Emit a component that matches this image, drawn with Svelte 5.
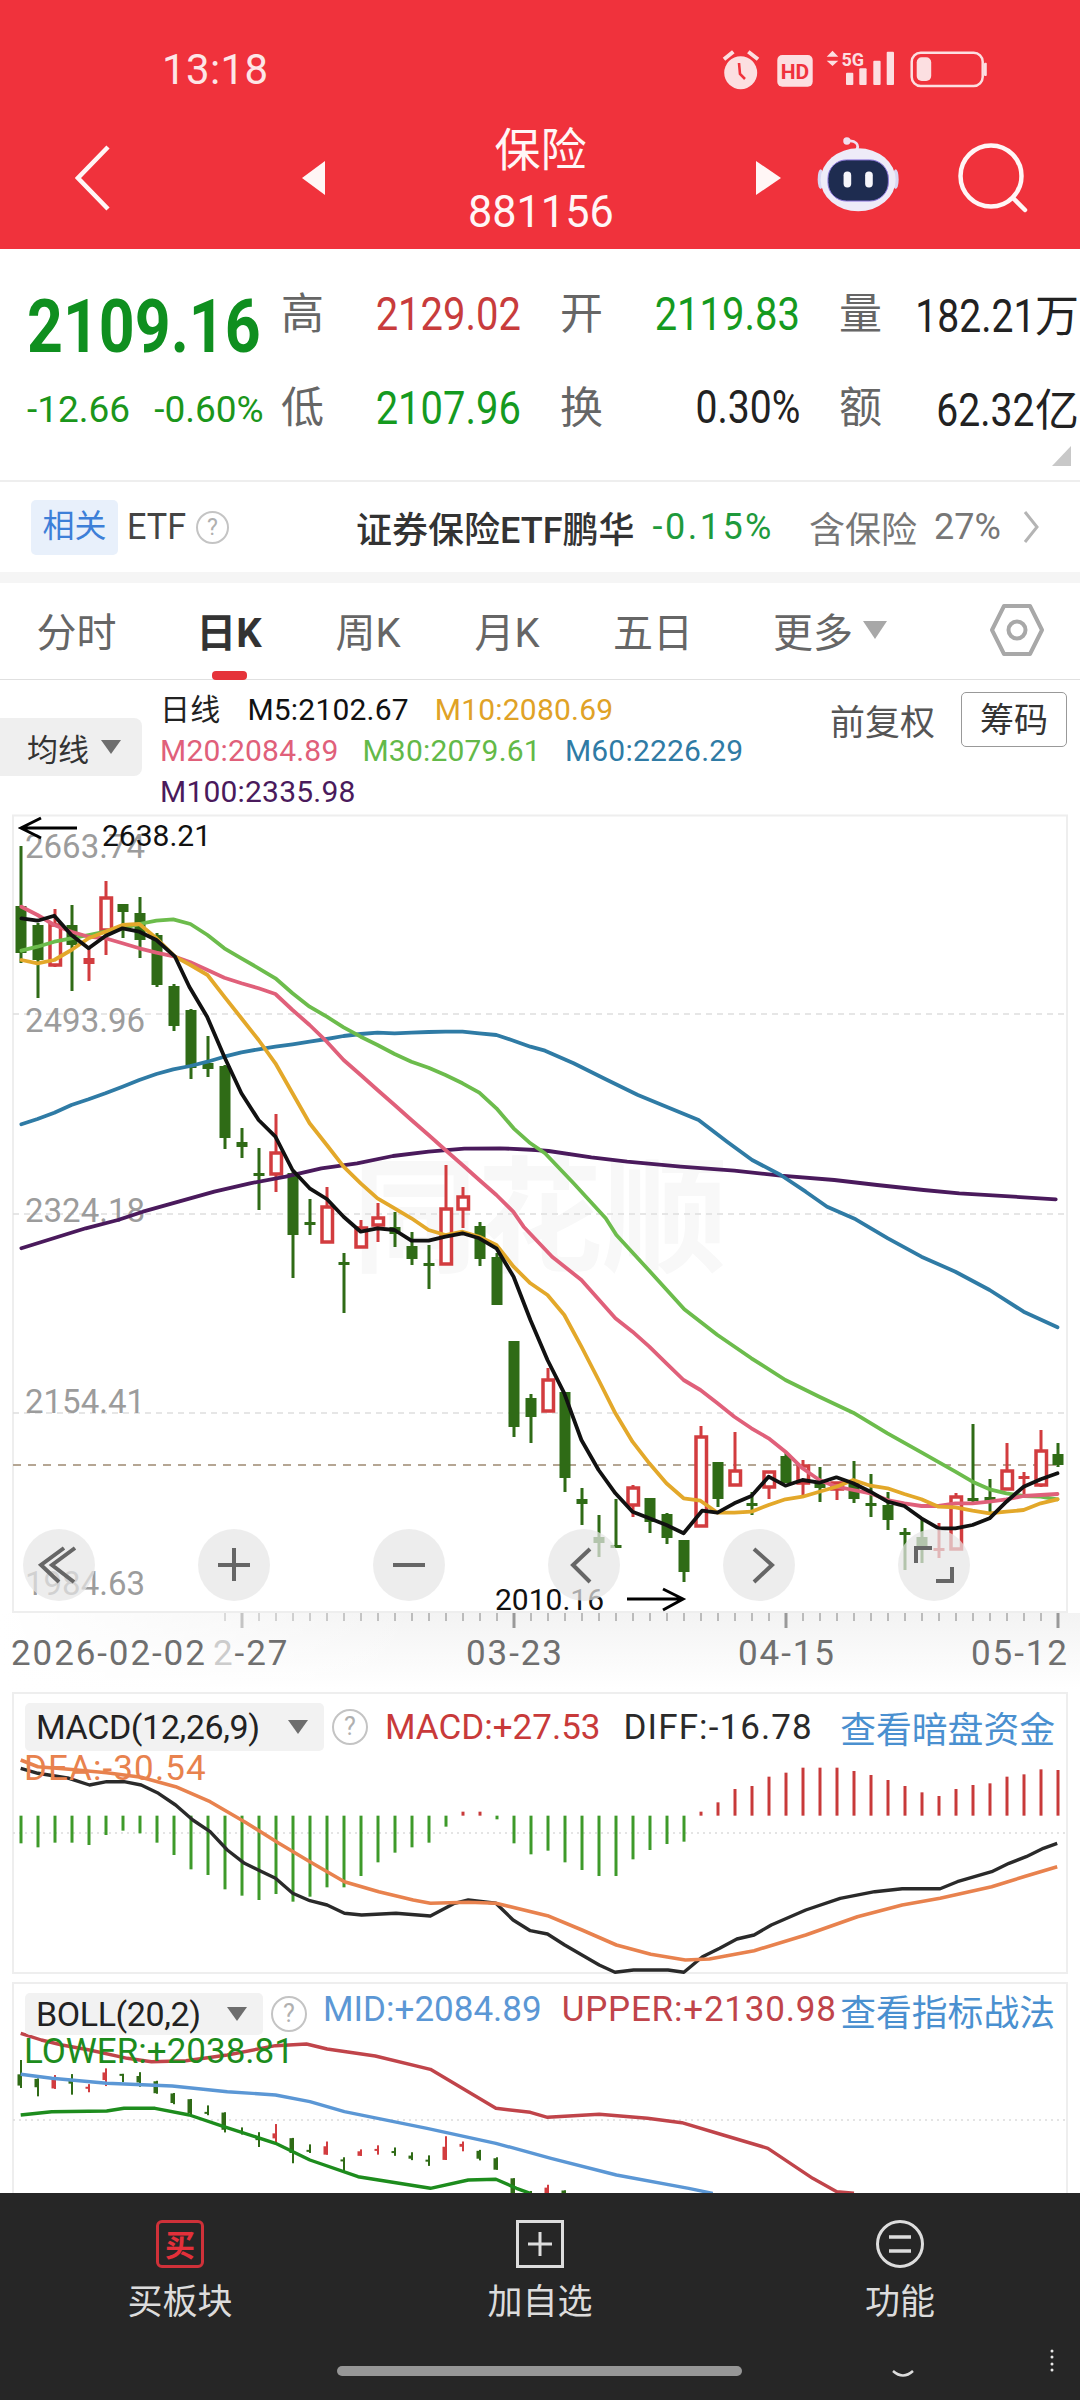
<script lang="ts">
    // crop helpers: series below were read off the reference in crop coordinates
    const mapPts = (sx: number, ox: number, oy: number) => (pts: number[][]) =>
        pts.map(([x, y]) => [ox + x / sx, oy + y / 3]);
    const topL = mapPts(2.8, 0, 800);
    const topR = mapPts(2.8, 520, 800);
    const botL = mapPts(2.8, 0, 1220);
    const botR = mapPts(2.8, 520, 1220);
    const macdP = mapPts(1.452, 0, 1640);
    const bollP = mapPts(1.452, 0, 1980);
    const line = (pts: number[][]) =>
        pts.map(([x, y]) => `${x.toFixed(1)},${y.toFixed(1)}`).join(" ");

    const stepX = (i: number) => 21 + 17 * i;

    // wickTop, wickBottom, bodyTop, bodyBottom, kind
    const candles: [number, number, number, number, string][] = [
        [846, 963, 906, 953, "g"], [923, 998, 925, 960, "g"], [909, 967, 925, 965, "h"],
        [905, 991, 925, 945, "g"], [947, 981, 958, 964, "r"], [881, 955, 898, 930, "h"],
        [904, 938, 904, 912, "g"], [897, 958, 913, 940, "g"], [933, 987, 935, 985, "g"],
        [984, 1031, 986, 1026, "g"], [1009, 1079, 1010, 1068, "g"], [1036, 1077, 1063, 1069, "g"],
        [1065, 1149, 1066, 1138, "g"], [1128, 1158, 1142, 1147, "g"], [1148, 1210, 1173, 1175, "g"],
        [1114, 1192, 1153, 1174, "h"], [1172, 1278, 1173, 1235, "g"], [1199, 1235, 1222, 1225, "g"],
        [1187, 1242, 1207, 1242, "h"], [1253, 1313, 1262, 1264, "g"], [1220, 1247, 1228, 1247, "h"],
        [1203, 1242, 1218, 1225, "h"], [1212, 1247, 1227, 1234, "g"], [1232, 1265, 1246, 1259, "g"],
        [1245, 1289, 1263, 1265, "g"], [1165, 1264, 1209, 1264, "h"], [1187, 1228, 1197, 1209, "h"],
        [1222, 1266, 1226, 1259, "g"], [1253, 1305, 1257, 1305, "g"], [1341, 1437, 1341, 1427, "g"],
        [1394, 1443, 1398, 1417, "g"], [1368, 1411, 1380, 1411, "h"], [1392, 1492, 1392, 1478, "g"],
        [1488, 1525, 1499, 1504, "g"], [1515, 1557, 1537, 1543, "g"], [1499, 1547, 1545, 1547, "g"],
        [1485, 1517, 1488, 1505, "h"], [1498, 1533, 1498, 1522, "g"], [1513, 1544, 1514, 1538, "g"],
        [1540, 1582, 1540, 1572, "g"], [1426, 1526, 1437, 1526, "h"], [1462, 1507, 1462, 1499, "g"],
        [1432, 1485, 1471, 1485, "h"], [1492, 1515, 1503, 1506, "g"], [1472, 1499, 1472, 1487, "h"],
        [1453, 1483, 1456, 1483, "g"], [1460, 1495, 1466, 1483, "h"], [1467, 1502, 1482, 1488, "g"],
        [1482, 1500, 1483, 1489, "h"], [1461, 1503, 1483, 1499, "g"], [1474, 1517, 1503, 1505, "g"],
        [1492, 1530, 1505, 1520, "g"], [1528, 1570, 1532, 1534, "g"], [1518, 1563, 1537, 1547, "g"],
        [1523, 1558, 1548, 1550, "r"], [1493, 1549, 1497, 1549, "h"], [1424, 1502, 1498, 1500, "g"],
        [1479, 1515, 1497, 1501, "g"], [1443, 1489, 1471, 1489, "h"], [1472, 1495, 1476, 1478, "r"],
        [1430, 1487, 1451, 1485, "h"], [1443, 1467, 1454, 1465, "g"],
    ];

    const m5 = [
        ...topL([[60,355],[105,362],[152,347],[200,405],[248,445],[295,408],[343,385],[390,395],[438,420],[490,470],[530,560],[580,650],[628,770],[676,880],[724,960],[771,1010],[819,1110],[867,1165],[915,1197],[962,1250]]),
        ...botL([[1010,35],[1057,25],[1105,30],[1152,62],[1200,62],[1247,50],[1295,40],[1342,55],[1390,85],[1438,170],[1485,300],[1533,420]]),
        ...botR([[124,520],[172,660],[220,750],[267,820],[315,875],[362,895],[410,915],[458,940],[510,872],[553,878],[600,850],[648,828],[696,770],[743,797],[791,780],[838,788],[886,772],[933,790],[981,815],[1029,845],[1076,858],[1124,895],[1172,925],[1219,925],[1267,915],[1315,895],[1362,845],[1410,800],[1458,778],[1505,760]]),
    ];
    const m10 = [
        ...topL([[60,480],[105,490],[152,480],[200,450],[248,415],[295,395],[343,375],[390,372],[438,415],[490,470],[533,495],[581,525],[628,590],[676,655],[724,720],[771,790],[819,880],[867,970],[915,1035],[962,1100],[1010,1150],[1057,1195],[1105,1225],[1152,1255]]),
        ...botL([[1200,30],[1247,45],[1295,35],[1342,50],[1390,75],[1438,140],[1485,190],[1533,225]]),
        ...botR([[124,285],[172,380],[220,480],[267,580],[315,665],[362,730],[410,790],[458,835],[505,842],[553,878],[600,878],[648,875],[696,855],[743,838],[791,830],[838,815],[886,800],[933,780],[981,797],[1029,805],[1076,822],[1124,838],[1172,860],[1219,862],[1267,872],[1315,880],[1362,875],[1410,870],[1458,850],[1505,838]]),
    ];
    const m20 = [
        ...topL([[60,320],[105,345],[152,375],[200,395],[248,410],[295,415],[343,430],[390,445],[438,458],[490,470],[533,487],[581,510],[628,533],[676,550],[724,565],[771,582],[819,630],[867,675],[915,725],[962,780],[1010,825],[1057,870],[1105,915],[1152,960],[1200,1005],[1247,1050],[1295,1095],[1342,1140],[1390,1185],[1437,1235]]),
        ...botR([[10,20],[90,110],[172,180],[267,295],[315,335],[362,380],[410,430],[458,480],[505,510],[553,550],[600,590],[648,625],[696,655],[743,695],[791,745],[838,780],[886,800],[933,810],[981,820],[1029,840],[1076,850],[1124,858],[1172,858],[1219,850],[1267,850],[1315,845],[1362,838],[1410,828],[1458,825],[1505,822]]),
    ];
    const m30 = [
        ...topL([[60,452],[105,440],[152,425],[200,415],[248,405],[295,395],[343,385],[390,372],[438,362],[485,358],[533,372],[581,405],[628,445],[676,475],[724,505],[771,535],[819,580],[867,620],[915,650],[962,682],[1010,710],[1057,735],[1105,762],[1152,785],[1200,803],[1247,825],[1295,850],[1342,878],[1390,925],[1438,985],[1485,1030]]),
        ...topR([[70,1060],[150,1150],[240,1255]]),
        ...botR([[270,45],[360,150],[460,268],[553,345],[648,415],[743,480],[838,530],[933,578],[1029,640],[1124,697],[1219,755],[1267,785],[1315,808],[1362,820],[1410,828],[1458,830],[1505,838]]),
    ];
    const m60 = [
        ...topL([[60,973],[105,957],[152,938],[200,915],[248,898],[295,880],[343,860],[390,840],[438,822],[485,808],[533,798],[581,785],[628,770],[676,757],[724,748],[771,740],[819,733],[867,725],[915,717],[962,708],[1010,702],[1057,698],[1105,700],[1152,698],[1200,696],[1247,695],[1295,695],[1342,700],[1390,705],[1438,722],[1485,740]]),
        ...topR([[70,752],[150,790],[240,838],[330,885],[420,925],[500,960],[580,1025],[650,1080],[730,1125],[800,1175],[860,1220],[940,1258]]),
        ...botR([[1030,55],[1124,110],[1219,155],[1315,210],[1410,275],[1505,322]]),
    ];
    const m100 = [
        ...botL([[60,85],[240,25]]),
        ...topL([[330,1260],[400,1235],[500,1205],[600,1175],[700,1150],[800,1130],[900,1105],[1000,1090],[1100,1068],[1200,1055],[1300,1046],[1400,1045],[1500,1050]]),
        ...topR([[80,1053],[200,1072],[300,1085],[450,1100],[600,1112],[730,1127],[880,1140],[1000,1155],[1130,1170],[1230,1180],[1500,1198]]),
    ];
    const maLines = [
        { pts: m100, color: "#4a1a5c" },
        { pts: m60, color: "#2f7ba5" },
        { pts: m30, color: "#6cbc4c" },
        { pts: m20, color: "#e0607a" },
        { pts: m10, color: "#e3a82a" },
        { pts: m5, color: "#111" },
    ];

    const yLabels = [
        { text: "2663.74", y: 858 },
        { text: "2493.96", y: 1032 },
        { text: "2324.18", y: 1222 },
        { text: "2154.41", y: 1413 },
        { text: "1984.63", y: 1595 },
    ];
    const gridYs = [1014, 1214, 1413];
    const ticks = Array.from({ length: 50 }, (_, k) => k + 12);

    const floatBtns = [59, 234, 409, 584, 759, 934];

    // crop-y of each MACD bar's free end, baseline is 527
    const macdEnds = [
        610,622,608,608,615,585,572,580,608,645,688,705,748,767,780,762,785,770,742,742,708,667,638,622,608,560,
        515,515,538,610,643,632,667,690,708,708,658,630,612,605,
        515,487,447,438,410,398,383,383,383,393,405,420,438,457,468,447,435,430,410,403,388,390,
    ];
    const macdZero = 1640 + 527 / 3;
    const macdBars = macdEnds.map((end, i) => ({
        x: stepX(i),
        y2: 1640 + end / 3,
        up: end < 527,
    }));
    const diff = macdP([[30,385],[55,400],[100,415],[130,435],[155,425],[180,425],[205,435],[230,460],[255,495],[280,540],[305,575],[330,630],[355,670],[375,690],[400,715],[425,760],[450,782],[475,795],[500,820],[525,825],[575,820],[625,828],[660,790],[680,780],[720,790],[745,840],[770,872],[795,882],[820,915],[870,975],[893,997],[920,990],[970,990],[993,997],[1020,950],[1045,925],[1070,897],[1095,885],[1120,855],[1170,810],[1220,775],[1270,755],[1310,746],[1365,746],[1390,725],[1440,695],[1465,670],[1490,650],[1515,625],[1535,610]]);
    const dea = macdP([[30,360],[55,380],[100,388],[155,398],[205,412],[255,440],[305,485],[355,545],[405,610],[450,665],[500,725],[550,755],[600,780],[625,790],[680,787],[720,790],[795,827],[845,870],[895,915],[945,943],[995,960],[1030,957],[1095,932],[1170,885],[1245,830],[1310,795],[1365,775],[1440,740],[1490,708],[1535,680]]);

    const upper = bollP([[30,160],[60,180],[90,195],[130,210],[185,235],[220,245],[270,242],[330,225],[400,197],[445,192],[475,207],[545,228],[625,268],[720,385],[770,397],[795,412],[870,403],[940,415],[990,428],[1050,465],[1115,505],[1180,595],[1215,635],[1240,640]]);
    const mid = bollP([[30,283],[75,295],[155,310],[250,318],[330,335],[400,345],[450,365],[500,395],[620,445],[720,490],[800,535],[895,585],[1000,625],[1035,640]]);
    const lower = bollP([[30,405],[75,395],[155,393],[180,385],[225,385],[275,405],[325,440],[400,490],[450,540],[520,590],[625,625],[680,600],[720,598],[750,625],[770,640]]);
    const miniY = (y: number) => 2060 + (y - 846) * 0.239;

    const tabs = [
        { label: "分时", w: 153 },
        { label: "日K", w: 152, active: true },
        { label: "周K", w: 126 },
        { label: "月K", w: 152 },
        { label: "五日", w: 140 },
    ];
</script>

<div class="page">
    <header class="top">
        <div class="status">
            <span class="time">13:18</span>
            <svg class="status-icons" width="270" height="46" viewBox="0 0 270 46">
                <circle cx="20.7" cy="26.7" r="16.5" fill="#fcdfe1" />
                <path d="M19 17 L20 28 L25 33" fill="none" stroke="#f0323c" stroke-width="2.6" />
                <path d="M4 13.3 L13.3 5.7 M28.3 5.7 L38 13.3" stroke="#fcdfe1" stroke-width="4" />
                <rect x="57.3" y="9" width="35.4" height="31.7" rx="5" fill="#fcdfe1" />
                <text x="75" y="32.5" class="hd">HD</text>
                <path d="M112.5 4.7 L106.7 10.7 H118.3 Z M106.7 14.7 H118.3 L112.5 20 Z" fill="#fcdfe1" />
                <text x="121.5" y="19.5" class="five-g">5G</text>
                <rect x="126" y="26.7" width="7.3" height="12.3" rx="1" fill="#fcdfe1" />
                <rect x="139.3" y="22.3" width="7.3" height="16.7" rx="1" fill="#fcdfe1" />
                <rect x="153.3" y="14.7" width="7.3" height="24.3" rx="1" fill="#fcdfe1" />
                <rect x="166.7" y="5.7" width="7.3" height="33.3" rx="1" fill="#fcdfe1" />
                <rect x="191.7" y="6.7" width="71" height="33.3" rx="9" fill="none" stroke="#fcdfe1" stroke-width="2.5" />
                <rect x="196.7" y="11.3" width="14.5" height="23.7" rx="5" fill="#fcdfe1" />
                <rect x="264" y="16.7" width="2.8" height="13.3" rx="1" fill="#fcdfe1" />
            </svg>
        </div>
        <div class="nav">
            <svg class="back" width="36" height="66" viewBox="0 0 36 66">
                <path d="M33 2 L3 33 L33 64" fill="none" stroke="#fff6f6" stroke-width="4.5" />
            </svg>
            <svg class="tri-left" width="23" height="34" viewBox="0 0 23 34"><path d="M23 0 V34 L0 17 Z" fill="#fff6f6" /></svg>
            <div class="title">
                <span class="name">保险</span>
                <span class="code">881156</span>
            </div>
            <svg class="tri-right" width="25" height="34" viewBox="0 0 25 34"><path d="M0 0 V34 L25 17 Z" fill="#fff6f6" /></svg>
            <svg class="robot" width="83" height="78" viewBox="355 315 250 235">
                <path d="M472 362 C486 345 470 328 445 334" fill="none" stroke="#f1dfef" stroke-width="8" />
                <circle cx="445" cy="333" r="11" fill="#f1dfef" />
                <ellipse cx="366" cy="448" rx="9" ry="30" fill="#d8d6f2" />
                <ellipse cx="592" cy="448" rx="9" ry="30" fill="#d8d6f2" />
                <ellipse cx="479" cy="450" rx="113" ry="95" fill="#eeebf8" />
                <rect x="388" y="390" width="182" height="124" rx="56" fill="#1e2c50" stroke="#8d78dd" stroke-width="3" />
                <rect x="435" y="425" width="23" height="48" rx="11" fill="#f6f6fb" />
                <rect x="500" y="425" width="23" height="48" rx="11" fill="#f6f6fb" />
            </svg>
            <svg class="search" width="70" height="70" viewBox="0 0 70 70">
                <circle cx="33" cy="33" r="30.5" fill="none" stroke="#fff6f6" stroke-width="4.5" />
                <path d="M55 55 L67 67" stroke="#fff6f6" stroke-width="4.5" stroke-linecap="round" />
            </svg>
        </div>
    </header>

    <section class="quote">
        <div class="cell-left">
            <div class="price">2109.16</div>
        </div>
        <div class="cell"><span class="label">高</span><span class="val red">2129.02</span></div>
        <div class="cell"><span class="label">开</span><span class="val green">2119.83</span></div>
        <div class="cell"><span class="label">量</span><span class="unit-val"><span class="val dark">182.21</span>万</span></div>
        <div class="cell-left change">
            <span>-12.66</span>
            <span>-0.60%</span>
        </div>
        <div class="cell"><span class="label">低</span><span class="val green">2107.96</span></div>
        <div class="cell"><span class="label">换</span><span class="val dark">0.30%</span></div>
        <div class="cell"><span class="label">额</span><span class="unit-val"><span class="val dark">62.32</span>亿</span></div>
        <span class="corner"></span>
    </section>

    <section class="etf">
        <span class="badge">相关</span>
        <span class="etf-tag">ETF</span>
        <span class="help etf-help">?</span>
        <span class="etf-name">证券保险ETF鹏华</span>
        <span class="etf-chg">-0.15%</span>
        <span class="etf-hold">含保险</span>
        <span class="etf-pct">27%</span>
        <svg class="etf-arrow" width="16" height="32" viewBox="0 0 16 32">
            <path d="M2 1 L14 16 L2 31" fill="none" stroke="#b4b4b4" stroke-width="3" />
        </svg>
    </section>
    <div class="band"></div>

    <nav class="tabs">
        {#each tabs as t}
            <span class="tab" class:active={t.active} style="width:{t.w}px">{t.label}</span>
        {/each}
        <span class="tab more">更多<i class="caret"></i></span>
        <svg class="gear" width="54" height="54" viewBox="0 0 54 54">
            <path d="M14 3 H40 L52 27 L40 51 H14 L2 27 Z" fill="none" stroke="#a8a8a8" stroke-width="4" stroke-linejoin="round" />
            <circle cx="27" cy="27" r="8.5" fill="none" stroke="#a8a8a8" stroke-width="4" />
        </svg>
    </nav>

    <div class="legend-row">
        <div class="ma-btn">均线<i class="caret small"></i></div>
        <div class="legend">
            <span class="cn">日线</span>
            <span style="color:#111">M5:2102.67</span>
            <span class="m10" style="color:#e0a226">M10:2080.69</span>
            <span style="color:#e0607a">M20:2084.89</span>
            <span style="color:#63b948">M30:2079.61</span>
            <span style="color:#2f7ba5">M60:2226.29</span>
            <span style="color:#4a1a5c">M100:2335.98</span>
        </div>
        <div class="legend-right">
            <span class="adjust">前复权</span>
            <span class="chip">筹码</span>
        </div>
    </div>

    <svg class="chart main" width="1080" height="878" viewBox="0 814 1080 878">
        <defs>
            <linearGradient id="bandFade" x1="0" y1="0" x2="0" y2="1">
                <stop offset="0" stop-color="#f3f3f3" />
                <stop offset="1" stop-color="#fff" />
            </linearGradient>
            <linearGradient id="leftFade" x1="0" y1="0" x2="1" y2="0">
                <stop offset="0" stop-color="#fff" />
                <stop offset="1" stop-color="#fff" stop-opacity="0" />
            </linearGradient>
        </defs>

        <text x="540" y="1262" class="watermark">同花顺</text>

        <rect x="13" y="815.5" width="1054" height="796.5" fill="none" stroke="#eeeeee" stroke-width="2" />
        {#each gridYs as y}
            <line x1="13" x2="1067" y1={y} y2={y} stroke="#dedede" stroke-width="1.5" stroke-dasharray="6 5" />
        {/each}
        <line x1="13" x2="1060" y1="1465" y2="1465" stroke="#b5a694" stroke-width="2" stroke-dasharray="8 7" />

        {#each yLabels as l}
            <text x="25" y={l.y} class="y-label">{l.text}</text>
        {/each}

        {#each candles as [wt, wb, bt, bb, kind], i}
            {@const color = kind === "g" ? "#2f6b16" : "#d23c3f"}
            <rect x={stepX(i) - 1.5} y={wt} width="3" height={wb - wt} fill={color} />
            {#if kind === "h"}
                <rect x={stepX(i) - 5} y={bt} width="10.5" height={bb - bt} fill="#fff" stroke={color} stroke-width="3.5" />
            {:else}
                <rect x={stepX(i) - 5.5} y={bt} width="11" height={Math.max(bb - bt, 3)} fill={color} />
            {/if}
        {/each}

        {#each maLines as m}
            <polyline points={line(m.pts)} fill="none" stroke={m.color} stroke-width="3.8" stroke-linejoin="round" stroke-linecap="round" />
        {/each}

        <text x="102" y="846" class="mark">2638.21</text>
        <path d="M77 828 H21 M41 818 L21 828 L41 838" fill="none" stroke="#000" stroke-width="3" />
        <text x="495" y="1610" class="mark">2010.16</text>
        <path d="M627 1599 H683 M663 1589 L683 1599 L663 1610" fill="none" stroke="#000" stroke-width="3" />

        {#each floatBtns as cx}
            <circle {cx} cy="1565" r="36" fill="#e6e6e6" fill-opacity="0.72" />
        {/each}
        <g fill="none" stroke="#666" stroke-width="4">
            <path d="M64 1548 L41 1565 L59 1582 M75 1548 L52 1565 L74 1582" />
            <path d="M218 1565 H250 M234 1548 V1581" />
            <path d="M393 1565 H425" />
            <path d="M590 1549 L573 1565 L590 1582" />
            <path d="M754 1549 L772 1565 L754 1582" />
            <path d="M916 1563 V1548 H932 M936 1581 H952 V1567" />
        </g>

        <rect x="0" y="1613" width="1080" height="76" fill="url(#bandFade)" />
        {#each ticks as i}
            {@const major = (i - 13) % 16 === 0}
            <rect x={stepX(i) - (major ? 1.5 : 1)} y="1613" width={major ? 3 : 2} height={major ? 15 : 8} fill={major ? "#999" : "#bbb"} />
        {/each}
        <rect x="0" y="1613" width="420" height="76" fill="url(#leftFade)" />

        <text x="11" y="1665" class="date">2026-02-02</text>
        <text x="213" y="1665" class="date"><tspan fill="#ccc">2</tspan>-27</text>
        <text x="466" y="1665" class="date">03-23</text>
        <text x="738" y="1665" class="date">04-15</text>
        <text x="971" y="1665" class="date">05-12</text>
    </svg>

    <div class="panel">
        <svg class="chart" width="1080" height="288" viewBox="0 1692 1080 288">
            <rect x="13" y="1693" width="1054" height="280" fill="none" stroke="#eeeeee" stroke-width="2" />
            <line x1="13" x2="1067" y1="1833" y2="1833" stroke="#dcdcdc" stroke-width="1.5" stroke-dasharray="2 4" />
            {#each macdBars as b}
                <line x1={b.x} x2={b.x} y1={macdZero} y2={b.y2} stroke={b.up ? "#c83a3a" : "#3e9a2a"} stroke-width="3" />
            {/each}
            <polyline points={line(diff)} fill="none" stroke="#2a2a2a" stroke-width="3.4" stroke-linejoin="round" />
            <polyline points={line(dea)} fill="none" stroke="#e8824e" stroke-width="3.6" stroke-linejoin="round" />
        </svg>
        <div class="panel-head">
            <span class="ind-btn macd-btn">MACD(12,26,9)<i class="caret small"></i></span>
            <span class="help">?</span>
            <span class="ind-val" style="color:#c83a3a; margin-left:17px">MACD:+27.53</span>
            <span class="ind-val wide" style="color:#2a2a2a; margin-left:23px">DIFF:-16.78</span>
            <span class="ind-link">查看暗盘资金</span>
        </div>
        <span class="ind-sub wide" style="color:#e8824e; top:57px">DEA:-30.54</span>
    </div>

    <div class="panel boll">
        <svg class="chart" width="1080" height="420" viewBox="0 1980 1080 420">
            <rect x="13" y="1983" width="1054" height="420" fill="none" stroke="#eeeeee" stroke-width="2" />
            <line x1="13" x2="1067" y1="2120" y2="2120" stroke="#dcdcdc" stroke-width="1.5" stroke-dasharray="2 4" />
            {#each candles as [wt, wb, bt, bb, kind], i}
                {@const color = kind === "g" ? "#2f6b16" : "#d23c3f"}
                <rect x={stepX(i) - 1} y={miniY(wt)} width="2" height={(wb - wt) * 0.239} fill={color} />
                <rect x={stepX(i) - 3.5} y={miniY(bt)} width="4.5" height={Math.max((bb - bt) * 0.239, 2)} fill={color} />
            {/each}
            <polyline points={line(upper)} fill="none" stroke="#c0444a" stroke-width="3.4" stroke-linejoin="round" />
            <polyline points={line(mid)} fill="none" stroke="#5b97d5" stroke-width="3.4" stroke-linejoin="round" />
            <polyline points={line(lower)} fill="none" stroke="#1d8c1d" stroke-width="3.4" stroke-linejoin="round" />
        </svg>
        <div class="panel-head boll-head">
            <span class="ind-btn boll-btn">BOLL(20,2)<i class="caret small"></i></span>
            <span class="help">?</span>
            <span class="ind-val" style="color:#5b97d5; margin-left:16px">MID:+2084.89</span>
            <span class="ind-val" style="color:#c0444a; margin-left:20px; letter-spacing:0.8px">UPPER:+2130.98</span>
            <span class="ind-link">查看指标战法</span>
        </div>
        <span class="ind-sub" style="color:#1d8c1d; top:52px">LOWER:+2038.81</span>
    </div>

    <footer class="bottom">
        <div class="actions">
            <div class="action">
                <span class="buy-icon">买</span>
                <span class="action-label">买板块</span>
            </div>
            <div class="action">
                <svg width="48" height="48" viewBox="0 0 48 48">
                    <rect x="1.5" y="1.5" width="45" height="45" fill="none" stroke="#ddd" stroke-width="3" />
                    <path d="M24 12 V36 M12 24 H36" stroke="#ddd" stroke-width="3" />
                </svg>
                <span class="action-label">加自选</span>
            </div>
            <div class="action">
                <svg width="48" height="48" viewBox="0 0 48 48">
                    <circle cx="24" cy="24" r="22.5" fill="none" stroke="#ddd" stroke-width="3" />
                    <path d="M13 17 H35 M13 31 H35" stroke="#ddd" stroke-width="3.5" />
                </svg>
                <span class="action-label">功能</span>
            </div>
        </div>
        <div class="home-bar"></div>
        <svg class="smudge" width="170" height="40" viewBox="0 0 170 40">
            <path d="M2 24 Q12 33 22 24" fill="none" stroke="#dcdcdc" stroke-width="2.5" />
            <g fill="#e8e8e8">
                <circle cx="161" cy="4" r="1.5" /><circle cx="161" cy="10" r="1.5" />
                <circle cx="161" cy="17" r="1.5" /><circle cx="161" cy="23" r="1.5" />
            </g>
        </svg>
    </footer>
</div>

<style>
    :global(body) {
        margin: 0;
        background: #fff;
    }

    .page {
        position: relative;
        width: 1080px;
        height: 2400px;
        overflow: hidden;
        background: #fff;
        font-family: Roboto, "Noto Sans CJK SC", sans-serif;
    }

    svg {
        display: block;
    }

    /* header */
    .top {
        height: 249px;
        box-sizing: border-box;
        background: #f0323c;
        padding-top: 46px;
    }

    .status {
        display: flex;
        align-items: center;
        justify-content: space-between;
        height: 46px;
        padding: 0 90px 0 162px;
    }

    .time {
        font: 42px Roboto, sans-serif;
        color: #fde6e7;
        letter-spacing: 0.4px;
    }

    .hd {
        font: bold 21px Roboto, sans-serif;
        fill: #f0323c;
        text-anchor: middle;
    }

    .five-g {
        font: bold 18px Roboto, sans-serif;
        fill: #fcdfe1;
    }

    .nav {
        display: flex;
        align-items: center;
        height: 104px;
        margin-top: 34px;
        padding-left: 75px;
    }

    .tri-left {
        margin-left: 191px;
    }

    .title {
        display: flex;
        flex-direction: column;
        align-items: center;
        width: 431px;
        color: #fff6f6;
    }

    .name {
        font: 46px/50px "Noto Sans CJK SC", sans-serif;
        margin-top: 2px;
    }

    .code {
        font: 45px/52px Roboto, sans-serif;
        margin-top: 15px;
        transform: scaleX(0.96);
    }

    .robot {
        margin: 0 0 8px 36px;
    }

    .search {
        margin-left: 58px;
    }

    /* quote block */
    .quote {
        position: relative;
        display: grid;
        grid-template-columns: 215px 240px 240px 240px;
        column-gap: 39px;
        row-gap: 34px;
        grid-auto-rows: 60px;
        height: 233px;
        box-sizing: border-box;
        padding: 34px 0 0 27px;
        border-bottom: 2px solid #eeeeee;
    }

    .cell-left {
        min-width: 0;
    }

    .price {
        font-size: 74px;
        font-weight: bold;
        line-height: 60px;
        padding-top: 14px;
        color: #0f8f1f;
        transform: scaleX(0.846);
        transform-origin: left center;
    }

    .change {
        display: flex;
        gap: 24px;
        font-size: 37px;
        line-height: 66px;
        color: #1b961b;
    }

    .change span {
        flex: none;
    }

    .cell {
        display: flex;
        align-items: center;
        justify-content: space-between;
    }

    .label {
        margin-bottom: 6px;
        font: 43px "Noto Sans CJK SC", sans-serif;
        color: #666;
    }

    .val {
        display: inline-block;
        font-size: 47px;
        transform: scaleX(0.85);
        transform-origin: right center;
    }

    .val.dark {
        font-size: 46px;
        color: #222;
    }

    .unit-val {
        font: 44px "Noto Sans CJK SC", sans-serif;
        color: #222;
    }

    .unit-val .val {
        font-family: Roboto, sans-serif;
    }

    .red {
        color: #c83c3c;
    }

    .green {
        color: #159a1f;
    }

    .corner {
        position: absolute;
        right: 9px;
        bottom: 14px;
        border-style: solid;
        border-width: 0 0 20px 19px;
        border-color: transparent transparent #c8c8c8 transparent;
    }

    /* related ETF */
    .etf {
        display: flex;
        align-items: center;
        height: 90px;
        padding-left: 31px;
        font: 36px Roboto, "Noto Sans CJK SC", sans-serif;
    }

    .badge {
        width: 87px;
        height: 55px;
        line-height: 53px;
        text-align: center;
        font-size: 32px;
        color: #3d7fd8;
        background: #e8f0fb;
        border-radius: 5px;
    }

    .etf-tag {
        width: 59px;
        margin-left: 9px;
        color: #444;
        transform: scaleX(0.95);
        transform-origin: left center;
    }

    .help {
        flex: none;
        box-sizing: border-box;
        width: 33px;
        height: 33px;
        border: 2px solid #c4c4c4;
        border-radius: 50%;
        text-align: center;
        font: 23px/29px Roboto, sans-serif;
        color: #b0b0b0;
    }

    .etf-help {
        margin-left: 10px;
    }

    .etf-name {
        margin-left: 127px;
        color: #333;
        font-weight: 500;
    }

    .etf-chg {
        margin-left: 18px;
        color: #1e9a3c;
        letter-spacing: 2.5px;
    }

    .etf-hold {
        margin-left: 35px;
        color: #777;
    }

    .etf-pct {
        margin-left: 17px;
        color: #777;
    }

    .etf-arrow {
        margin-left: 22px;
    }

    .band {
        height: 11px;
        background: #f5f5f5;
    }

    /* period tabs */
    .tabs {
        display: flex;
        align-items: center;
        height: 97px;
        box-sizing: border-box;
        padding-bottom: 2px;
        border-bottom: 1.5px solid #e0e0e0;
    }

    .tab {
        position: relative;
        text-align: center;
        font: 40px Roboto, "Noto Sans CJK SC", sans-serif;
        color: #666;
    }

    .tab.active {
        font-weight: bold;
        color: #333;
    }

    .tab.active::after {
        content: "";
        position: absolute;
        left: 59px;
        bottom: -21px;
        width: 35px;
        height: 9px;
        border-radius: 4px;
        background: #e5333a;
    }

    .more {
        display: flex;
        align-items: center;
        margin-left: 50px;
    }

    .caret {
        display: block;
        margin-left: 10px;
        border-style: solid;
        border-width: 18px 12px 0 12px;
        border-color: #a8a8a8 transparent transparent transparent;
    }

    .caret.small {
        margin-left: 0;
        border-width: 14px 10px 0 10px;
        border-top-color: #6e6e6e;
    }

    .gear {
        margin-left: auto;
        margin-right: 36px;
    }

    /* moving average legend */
    .legend-row {
        display: flex;
        align-items: flex-start;
        height: 134px;
    }

    .ma-btn {
        display: flex;
        align-items: center;
        gap: 12px;
        width: 142px;
        height: 58px;
        box-sizing: border-box;
        margin-top: 38px;
        padding-left: 27px;
        border-radius: 0 8px 8px 0;
        background: #efefef;
        font: 31px "Noto Sans CJK SC", sans-serif;
        color: #333;
    }

    .legend {
        display: flex;
        flex-wrap: wrap;
        column-gap: 24px;
        width: 620px;
        margin-left: 18px;
        padding-top: 9px;
        font: 30px/41px Roboto, "Noto Sans CJK SC", sans-serif;
        letter-spacing: 0.2px;
    }

    .legend .cn {
        color: #222;
        margin-right: 3px;
    }

    .legend .m10 {
        margin-left: 2px;
    }

    .legend-right {
        display: flex;
        align-items: center;
        gap: 26px;
        margin: 12px 13px 0 auto;
    }

    .adjust {
        font: 35px "Noto Sans CJK SC", sans-serif;
        color: #555;
    }

    .chip {
        width: 106px;
        height: 55px;
        box-sizing: border-box;
        line-height: 50px;
        text-align: center;
        border: 1.5px solid #999;
        border-radius: 5px;
        font: 34px/50px "Noto Sans CJK SC", sans-serif;
        color: #333;
    }

    /* charts */
    .watermark {
        font: 700 125px "Noto Sans CJK SC", sans-serif;
        fill: #f8f8f8;
        text-anchor: middle;
    }

    .y-label {
        font: 33px Roboto, sans-serif;
        fill: #9c9c9c;
    }

    .mark {
        font: 30px Roboto, sans-serif;
        fill: #111;
    }

    .date {
        font: 35px Roboto, sans-serif;
        letter-spacing: 1.9px;
        fill: #6f6f6f;
    }

    .panel {
        position: relative;
        height: 288px;
    }

    .boll {
        height: 420px;
    }

    .panel-head {
        position: absolute;
        top: 9px;
        left: 25px;
        right: 25px;
        display: flex;
        align-items: center;
        white-space: nowrap;
    }

    .boll-head {
        top: 13px;
        height: 42px;
    }

    .boll-head .boll-btn {
        height: 42px;
    }

    .boll-head .ind-val,
    .boll-head .ind-link {
        line-height: 42px;
        transform: translateY(-4px);
    }

    .ind-btn {
        display: flex;
        align-items: center;
        justify-content: space-between;
        box-sizing: border-box;
        height: 48px;
        margin-right: 8px;
        padding: 0 16px 0 11px;
        border-radius: 5px;
        background: #f2f2f2;
        font: 34px Roboto, sans-serif;
        letter-spacing: -0.4px;
        color: #222;
    }

    .macd-btn {
        width: 299px;
    }

    .boll-btn {
        width: 238px;
    }

    .panel-head .help {
        width: 36px;
        height: 36px;
        font-size: 25px;
        line-height: 32px;
    }

    .ind-val {
        flex: none;
        font: 35px Roboto, sans-serif;
    }

    .ind-link {
        flex: none;
        margin-left: auto;
        font: 35.8px "Noto Sans CJK SC", sans-serif;
        color: #4a90d0;
    }

    .ind-sub {
        position: absolute;
        left: 24px;
        font: 35px/40px Roboto, sans-serif;
    }

    .wide {
        letter-spacing: 1.1px;
    }

    /* bottom action bar */
    .bottom {
        position: absolute;
        left: 0;
        right: 0;
        bottom: 0;
        height: 207px;
        background: #262626;
    }

    .actions {
        display: grid;
        grid-template-columns: repeat(3, 1fr);
        padding-top: 27px;
    }

    .action {
        display: flex;
        flex-direction: column;
        align-items: center;
        gap: 9px;
    }

    .buy-icon {
        box-sizing: border-box;
        width: 48px;
        height: 48px;
        border: 3px solid #cf3139;
        border-radius: 6px;
        text-align: center;
        font: bold 30px/41px "Noto Sans CJK SC", sans-serif;
        color: #e3303a;
    }

    .action-label {
        font: 35px/44px "Noto Sans CJK SC", sans-serif;
        color: #dcdcdc;
    }

    .home-bar {
        position: absolute;
        left: 337px;
        top: 173px;
        width: 405px;
        height: 10px;
        border-radius: 5px;
        background: #969696;
    }

    .smudge {
        position: absolute;
        left: 891px;
        top: 154px;
    }
</style>
